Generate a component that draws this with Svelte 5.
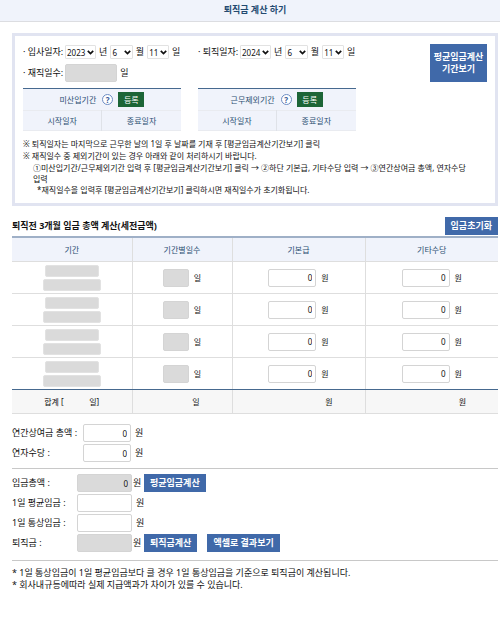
<script lang="ts">
  interface DateValue {
    year: string;
    month: string;
    day: string;
  }

  let joined: DateValue = $state({ year: "2023", month: "6", day: "11" });
  let retired: DateValue = $state({ year: "2024", month: "6", day: "11" });

  const years = Array.from({ length: 40 }, (_, i) => String(1990 + i));
  const months = Array.from({ length: 12 }, (_, i) => String(i + 1));
  const days = Array.from({ length: 31 }, (_, i) => String(i + 1));

  let rows = $state(
    Array.from({ length: 4 }, () => ({
      start: "",
      end: "",
      days: "",
      base: "0",
      extra: "0",
    })),
  );

  let workDays = $state("");
  let bonus = $state("0");
  let leave = $state("0");
  let total = $state("0");
  let dailyAverage = $state("");
  let dailyOrdinary = $state("");
  let severance = $state("");
</script>

{#snippet picker(value: DateValue, key: keyof DateValue, options: string[], unit: string, name: string)}
  <span class="select {key}">
    <select bind:value={value[key]} aria-label="{name} {unit}">
      {#each options as option}
        <option value={option}>{option}</option>
      {/each}
    </select>
    <svg viewBox="0 0 7 5" aria-hidden="true">
      <path d="M0.8 0.8 L3.5 3.5 L6.2 0.8" />
    </svg>
  </span>
  <span class="unit">{unit}</span>
{/snippet}

{#snippet datePicker(label: string, value: DateValue)}
  <div class="date">
    <span class="date-label">· {label}:</span>
    {@render picker(value, "year", years, "년", label)}
    {@render picker(value, "month", months, "월", label)}
    {@render picker(value, "day", days, "일", label)}
  </div>
{/snippet}

{#snippet periodTable(title: string)}
  <table class="period">
    <thead>
      <tr>
        <th colspan="2">
          <div class="period-title">
            {title}
            <button class="help" type="button" aria-label="{title} 도움말">?</button>
            <button class="register" type="button">등록</button>
          </div>
        </th>
      </tr>
      <tr class="sub">
        <th>시작일자</th>
        <th>종료일자</th>
      </tr>
    </thead>
  </table>
{/snippet}

<header>
  <h1>퇴직금 계산 하기</h1>
</header>

<main>
  <section class="box">
    <div class="top">
      <div class="fields">
        <div class="dates">
          {@render datePicker("입사일자", joined)}
          {@render datePicker("퇴직일자", retired)}
        </div>
        <div class="date">
          <label class="date-label" for="work-days">· 재직일수:</label>
          <input id="work-days" class="work-days" readonly bind:value={workDays} />
          <span class="unit">일</span>
        </div>
      </div>
      <button class="btn view" type="button">평균임금계산<br />기간보기</button>
    </div>

    <div class="periods">
      {@render periodTable("미산입기간")}
      {@render periodTable("근무제외기간")}
    </div>

    <div class="guide">
      <p>※ 퇴직일자는 마지막으로 근무한 날의 1일 후 날짜를 기재 후 [평균임금계산기간보기] 클릭</p>
      <p>※ 재직일수 중 제외기간이 있는 경우 아래와 같이 처리하시기 바랍니다.</p>
      <p class="step">
        ①미산입기간/근무제외기간 입력 후 [평균임금계산기간보기] 클릭 → ②하단 기본급, 기타수당 입력 → ③연간상여금 총액, 연자수당<br />입력
      </p>
      <p class="step extra">*재직일수을 입력후 [평균임금계산기간보기] 클릭하시면 재직일수가 초기화됩니다.</p>
    </div>
  </section>

  <div class="heading">
    <h2>퇴직전 3개월 임금 총액 계산(세전금액)</h2>
    <button class="btn" type="button">임금초기화</button>
  </div>

  <table class="wages">
    <colgroup>
      <col class="col-period" />
      <col class="col-days" />
      <col />
      <col />
    </colgroup>
    <thead>
      <tr>
        <th>기간</th>
        <th>기간별일수</th>
        <th>기본급</th>
        <th>기타수당</th>
      </tr>
    </thead>
    <tbody>
      {#each rows as row, i}
        <tr>
          <td>
            <div class="range">
              <input class="start" readonly aria-label="시작일 {i + 1}" bind:value={row.start} />
              <input class="end" readonly aria-label="종료일 {i + 1}" bind:value={row.end} />
            </div>
          </td>
          <td>
            <div class="amount">
              <input class="count" readonly aria-label="일수 {i + 1}" bind:value={row.days} />일
            </div>
          </td>
          <td>
            <div class="amount">
              <input aria-label="기본급 {i + 1}" bind:value={row.base} />원
            </div>
          </td>
          <td>
            <div class="amount">
              <input aria-label="기타수당 {i + 1}" bind:value={row.extra} />원
            </div>
          </td>
        </tr>
      {/each}
    </tbody>
    <tfoot>
      <tr>
        <td><div class="sum"><span>합계 [</span><span>일]</span></div></td>
        <td class="right">일</td>
        <td class="right">원</td>
        <td class="right">원</td>
      </tr>
    </tfoot>
  </table>

  <div class="rows annual">
    <div class="row">
      <label for="bonus">연간상여금 총액 :</label>
      <input id="bonus" bind:value={bonus} />
      <span>원</span>
    </div>
    <div class="row">
      <label for="leave">연자수당 :</label>
      <input id="leave" bind:value={leave} />
      <span>원</span>
    </div>
  </div>

  <div class="rows result">
    <div class="row">
      <label for="total">임금총액 :</label>
      <input id="total" readonly bind:value={total} />
      <span>원</span>
      <button class="btn" type="button">평균임금계산</button>
    </div>
    <div class="row open">
      <label for="daily-average">1일 평균임금 :</label>
      <input id="daily-average" bind:value={dailyAverage} />
      <span>원</span>
    </div>
    <div class="row open">
      <label for="daily-ordinary">1일 통상임금 :</label>
      <input id="daily-ordinary" bind:value={dailyOrdinary} />
      <span>원</span>
    </div>
    <div class="row">
      <label for="severance">퇴직금 :</label>
      <input id="severance" readonly bind:value={severance} />
      <span>원</span>
      <button class="btn" type="button">퇴직금계산</button>
      <button class="btn excel" type="button">엑셀로 결과보기</button>
    </div>
  </div>

  <div class="notes">
    <p>* 1일 통상임금이 1일 평균임금보다 클 경우 1일 통상임금을 기준으로 퇴직금이 계산됩니다.</p>
    <p>* 회사내규등에따라 실제 지급액과가 차이가 있를 수 있습니다.</p>
  </div>
</main>

<style>
  :global(body) {
    background: #fff;
    color: #111;
    font-family: "Noto Sans", "Noto Sans CJK KR", sans-serif;
    font-size: 9px;
    line-height: 12px;
  }

  h1,
  h2,
  p {
    margin: 0;
    font-size: 9px;
  }

  input,
  select,
  button {
    box-sizing: border-box;
    margin: 0;
    font-family: inherit;
    color: #111;
  }

  input {
    height: 18px;
    padding: 0 3px;
    border: 1px solid #d4d4d4;
    border-radius: 2px;
    background: #fff;
    font-size: 8px;
    text-align: right;
  }

  input:read-only {
    background: #dadada;
  }

  header {
    height: 21px;
    border-bottom: 1px solid #dcdde1;
    background: #f0f3fb;
  }

  h1 {
    color: #234a70;
    line-height: 20px;
    padding-left: 10px;
    text-align: center;
  }

  main {
    padding: 11px 2px 0 12px;
  }

  .btn {
    height: 18px;
    padding: 0 5px;
    border: 1px solid #4069a9;
    background: #4069a9;
    color: #fff;
    font-size: 9px;
    font-weight: 700;
    line-height: 12px;
    white-space: nowrap;
  }

  .box {
    padding: 8px 8px 8px;
    border: 3px solid #e1e4f1;
  }

  .top {
    display: flex;
    justify-content: space-between;
    align-items: flex-start;
  }

  .fields {
    display: grid;
    gap: 5px;
  }

  .dates {
    display: flex;
    gap: 15px;
  }

  .date {
    display: flex;
    align-items: center;
    height: 16px;
    white-space: nowrap;
  }

  .dates .date {
    width: 160px;
  }

  .date-label {
    width: 42px;
    flex: none;
  }

  .select {
    display: grid;
    grid-template-columns: 1fr 9px;
    align-items: center;
  }

  .year {
    width: 32px;
  }

  .month,
  .day {
    width: 23px;
  }

  .select select {
    grid-area: 1 / 1 / 2 / 3;
    width: 100%;
    height: 14px;
    padding: 0 0 0 1px;
    border: 1px solid #e2e2e2;
    border-radius: 1px;
    background: #fff;
    appearance: none;
    font-size: 8px;
  }

  .select svg {
    grid-area: 1 / 2;
    width: 7px;
    height: 5px;
    pointer-events: none;
  }

  .select path {
    fill: none;
    stroke: #111;
    stroke-width: 1.7;
  }

  .unit {
    width: 15px;
    text-align: center;
  }

  .day + .unit {
    width: 14px;
  }

  .work-days {
    width: 52px;
  }

  .view {
    height: 38px;
    width: 57px;
    padding: 0;
  }

  .periods {
    display: flex;
    gap: 17px;
    margin-top: 6px;
  }

  table {
    border-collapse: collapse;
    table-layout: fixed;
    font-size: 8px;
  }

  th {
    padding: 0;
    color: #2b4f72;
    font-weight: 400;
  }

  .period {
    width: 34%;
    border-top: 1px solid #46698f;
    background: #f0f3fb;
  }

  .period tr {
    height: 22px;
    border-bottom: 1px solid #e9ebf0;
  }

  .period tr.sub {
    height: 20px;
  }

  .sub th + th {
    border-left: 1px solid #dfe2e8;
  }

  .period-title {
    display: flex;
    justify-content: center;
    align-items: center;
    gap: 6px;
  }

  .help {
    width: 11px;
    height: 11px;
    padding: 0;
    border: 1px solid #6d8dc4;
    border-radius: 50%;
    background: #fff;
    color: #35599a;
    font-size: 8px;
    font-weight: 700;
    line-height: 9px;
  }

  .register {
    width: 26px;
    height: 15px;
    margin-left: -1px;
    padding: 0;
    border: 0;
    background: #1c6537;
    color: #fff;
    font-size: 8px;
  }

  .guide {
    margin-top: 7px;
  }

  .guide p {
    font-size: 8px;
  }

  .guide .step {
    padding-left: 10px;
    line-height: 11px;
    white-space: nowrap;
  }

  .guide .extra {
    padding-left: 14px;
  }

  .heading {
    display: flex;
    justify-content: space-between;
    align-items: center;
    margin-top: 11px;
  }

  h2 {
    color: #111;
  }

  .wages {
    width: 100%;
    margin-top: 1px;
    border-top: 2px solid #9fb0c7;
  }

  .col-period {
    width: 120px;
  }

  .col-days {
    width: 100px;
  }

  .wages th,
  .wages td {
    padding: 0;
    border-bottom: 1px solid #dedede;
  }

  .wages th + th,
  .wages td + td {
    border-left: 1px solid #dedede;
  }

  .wages th {
    height: 23px;
    background: #f0f3fb;
  }

  .wages tbody td {
    height: 31px;
  }

  .wages tbody tr:last-child td {
    border-bottom-color: #46698f;
  }

  .range {
    display: grid;
    justify-items: center;
    gap: 2px;
  }

  .range input {
    height: 12px;
    border-color: #e2e2e2;
  }

  .start {
    width: 54px;
  }

  .end {
    width: 58px;
  }

  .amount {
    display: flex;
    justify-content: center;
    align-items: center;
    gap: 5px;
  }

  .amount input {
    width: 48px;
  }

  .amount .count {
    width: 26px;
  }

  .wages tfoot td {
    height: 23px;
    background: #f7f7f7;
  }

  .sum {
    display: flex;
    justify-content: space-between;
    width: 55px;
    margin: 0 auto;
  }

  .wages .right {
    padding-right: 32px;
    text-align: right;
  }

  .rows {
    display: grid;
    border-bottom: 1px solid #c8c8c8;
  }

  .annual {
    gap: 2px;
    padding: 10px 0 6px;
  }

  .result {
    gap: 2px;
    padding: 5px 0 8px;
  }

  .row {
    display: flex;
    align-items: center;
    height: 18px;
  }

  .row label {
    width: 65px;
  }

  .row input {
    width: 55px;
  }

  .row span {
    width: 12px;
    padding-left: 1px;
    box-sizing: border-box;
  }

  .annual label {
    width: 71px;
  }

  .annual input {
    width: 48px;
  }

  .annual span,
  .open span {
    padding-left: 4px;
  }

  .excel {
    margin-left: 10px;
  }

  .notes {
    padding-top: 6px;
  }
</style>
